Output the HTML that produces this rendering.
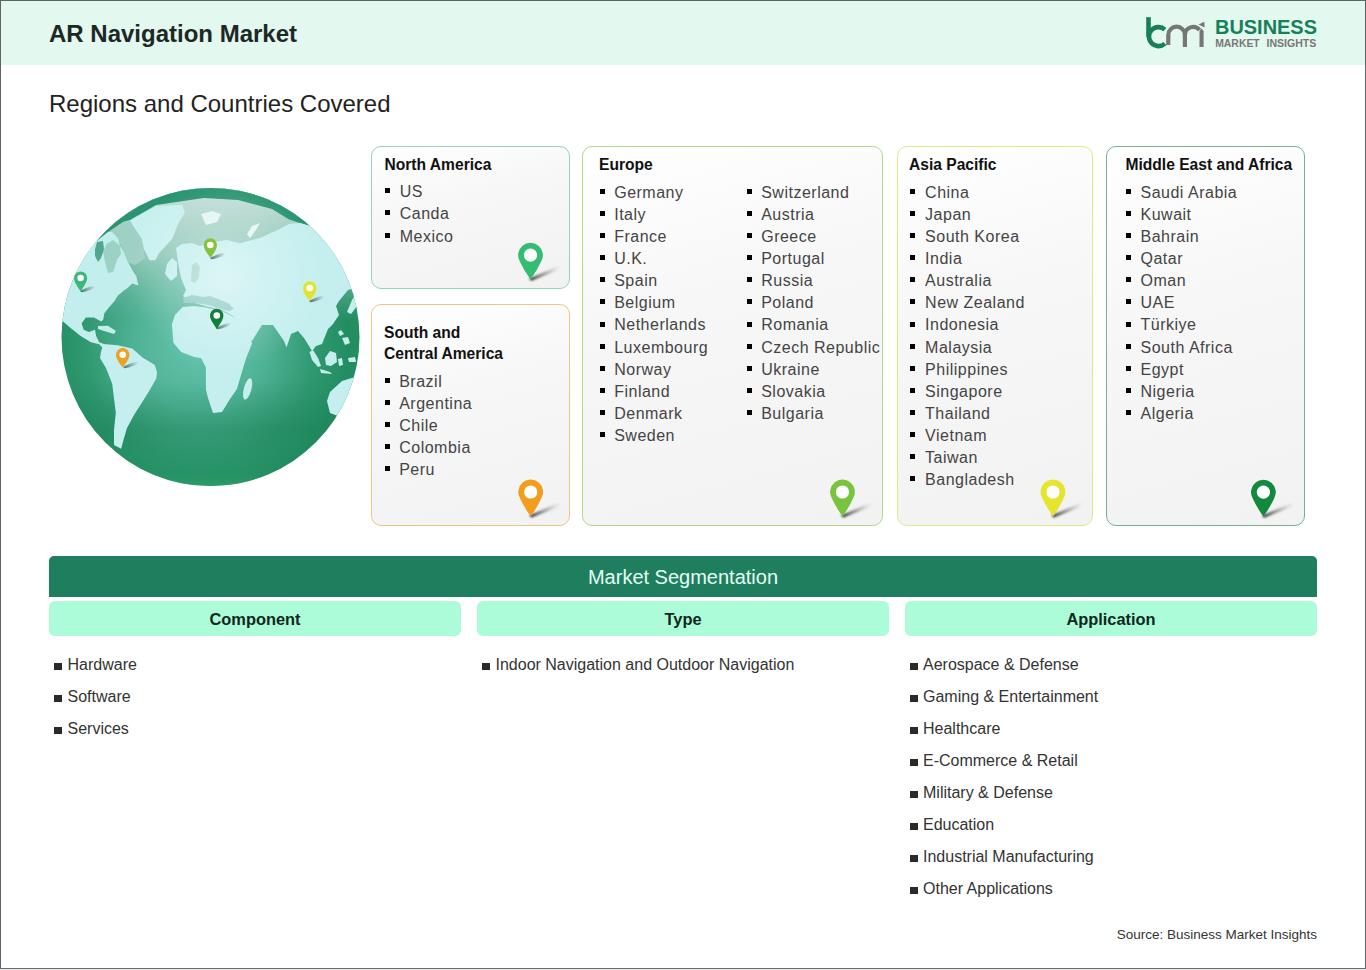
<!DOCTYPE html><html><head><meta charset="utf-8"><style>
*{margin:0;padding:0;box-sizing:border-box}
html,body{width:1366px;height:970px;overflow:hidden;background:#fff}
body{position:relative;font-family:"Liberation Sans",sans-serif;color:#222}
.abs{position:absolute;white-space:nowrap}
#frame{position:absolute;left:0;top:0;width:1366px;height:969px;border:1px solid #606366;border-top-color:#5c6766;border-bottom-color:#6a6d70}
#strip{position:absolute;left:0;top:969px;width:1366px;height:1px;background:#e6e8e8}
#hdr{position:absolute;left:1px;top:1px;width:1364px;height:64px;background:#e3f8ef}
.title{left:49px;top:19.5px;font-size:24px;font-weight:bold;color:#1d2826;line-height:28px}
.sub{left:49px;top:89.5px;font-size:24px;color:#222;line-height:28px}
.card{position:absolute;border:1.8px solid #9fd8bf;border-radius:10px;background:linear-gradient(165deg,#ffffff 0%,#f7f7f7 40%,#f2f2f2 100%)}
.ct{position:absolute;font-size:15.6px;font-weight:bold;color:#111;white-space:nowrap;line-height:20px}
.li{position:absolute;font-size:16px;color:#444;white-space:nowrap;line-height:20px;letter-spacing:0.5px}
.b{position:absolute;width:5px;height:5px;background:#000}
.seg{position:absolute;left:49px;top:556px;width:1268px;height:41px;background:#1e7e5e;border-radius:5px 5px 0 0;color:#e4fff6;font-size:20px;text-align:center;line-height:43px}
.sh{position:absolute;top:601px;height:34.5px;width:412px;background:#adfcd9;border-radius:6px;font-size:16.4px;font-weight:bold;text-align:center;line-height:36.5px;color:#0f281e}
.si{position:absolute;font-size:16px;color:#333;white-space:nowrap;line-height:20px}
.sb{position:absolute;width:8px;height:7px;background:#2a2a2a}
.src{right:49px;top:925.5px;font-size:13.5px;color:#333;line-height:18px}

</style></head><body>
<div id="hdr"></div><div id="frame"></div><div id="strip"></div>
<div class="abs title">AR Navigation Market</div>
<div class="abs sub">Regions and Countries Covered</div>
<svg id="logo" width="1366" height="70" style="position:absolute;left:0;top:0" viewBox="0 0 1366 70">
<path d="M1148.5,17.2 L1148.5,37" stroke="#17805a" stroke-width="4.6" fill="none"/>
<path d="M1164.9,29.6 A9.5,9.5 0 1 0 1164.9,43.6" stroke="#17805a" stroke-width="4.6" fill="none"/>
<path d="M1168.2,45 L1168.3,35 A8.3,8.3 0 0 1 1184.9,35 L1184.9,46.9" stroke="#767676" stroke-width="4.2" fill="none"/>
<path d="M1184.9,35 A8.2,8.2 0 0 1 1199.5,30" stroke="#767676" stroke-width="4.2" fill="none"/>
<path d="M1199.5,46.9 L1199.5,31 L1201.5,28.5 L1203.6,31 L1203.6,46.9 Z" fill="#767676"/>
<path d="M1198.5,24.5 L1204.3,21.8 L1204.6,27.5 Z" fill="#767676"/>
<text x="1215" y="34.2" font-family="Liberation Sans" font-weight="bold" font-size="20.6" fill="#17805a" textLength="102" lengthAdjust="spacingAndGlyphs">BUSINESS</text>
<text x="1215.2" y="47.3" font-family="Liberation Sans" font-weight="bold" font-size="11.2" fill="#777" textLength="44.5" lengthAdjust="spacingAndGlyphs">MARKET</text><text x="1266.5" y="47.3" font-family="Liberation Sans" font-weight="bold" font-size="11.2" fill="#777" textLength="49.8" lengthAdjust="spacingAndGlyphs">INSIGHTS</text>
</svg>

<svg id="globe" width="1366" height="520" style="position:absolute;left:0;top:0" viewBox="0 0 1366 520">
<defs>
<clipPath id="gclip"><circle cx="210.5" cy="337" r="149"/></clipPath>
<radialGradient id="hl2" cx="225" cy="275" r="95" gradientUnits="userSpaceOnUse">
<stop offset="0" stop-color="#ffffff" stop-opacity="0.4"/>
<stop offset="0.6" stop-color="#ffffff" stop-opacity="0.15"/>
<stop offset="1" stop-color="#ffffff" stop-opacity="0"/>
</radialGradient>
<radialGradient id="ocean" cx="200" cy="345" r="165" gradientUnits="userSpaceOnUse">
<stop offset="0" stop-color="#66c4ad"/>
<stop offset="0.4" stop-color="#4fb296"/>
<stop offset="0.7" stop-color="#2f9870"/>
<stop offset="0.9" stop-color="#238d62"/>
<stop offset="1" stop-color="#23905f"/>
</radialGradient>
<linearGradient id="topz" x1="0" y1="190" x2="0" y2="320" gradientUnits="userSpaceOnUse">
<stop offset="0" stop-color="#d3e6e4" stop-opacity="0.95"/>
<stop offset="0.5" stop-color="#b4dbd3" stop-opacity="0.7"/>
<stop offset="1" stop-color="#8fcabb" stop-opacity="0"/>
</linearGradient>
<linearGradient id="botband" x1="0" y1="380" x2="0" y2="490" gradientUnits="userSpaceOnUse">
<stop offset="0" stop-color="#1a7f55" stop-opacity="0"/>
<stop offset="0.45" stop-color="#187c52" stop-opacity="0.35"/>
<stop offset="0.8" stop-color="#1e8a5a" stop-opacity="0.2"/>
<stop offset="1" stop-color="#33aa70" stop-opacity="0.7"/>
</linearGradient>
<linearGradient id="pshg" x1="0" x2="1"><stop offset="0" stop-color="#1c3b33" stop-opacity="0.7"/><stop offset="1" stop-color="#1c3b33" stop-opacity="0"/></linearGradient>
</defs>
<g clip-path="url(#gclip)">
<rect x="55" y="180" width="310" height="320" fill="url(#ocean)"/>
<rect x="55" y="180" width="310" height="320" fill="url(#topz)"/>
<rect x="55" y="180" width="310" height="320" fill="url(#botband)"/>
<!-- arctic rim dark band -->
<path d="M40,240 L97,241 L108,232 L123,222 L130,220 L156,205 L204,198 L238,200 L272,209 L289,219.5 L300,223 L330,232 L380,232 L380,150 L40,150 Z" fill="#2a9470"/>
<!-- North America -->
<path d="M30,345 L63.1,321.5 L70.3,327.7 L80.6,336 L90.9,342.2 L99.2,344.2 L103.3,348.4 L104,344 L99.2,342.2 L96.1,336 L95,329.8 L88.9,331.9 L83.7,329.8 L81.6,323.6 L85.8,317.4 L94,317.4 L101.2,321.5 L103.3,319.5 L104.3,313.3 L108.5,308.1 L114.6,300.9 L117.7,295.8 L123.9,290.6 L127,288.6 L132.2,283.4 L138.4,285.5 L136.3,276.2 L132.2,270 L128,262 L124,252 L120,246 L118,238 L112,232 L108,232 L97,241 L30,241 Z" fill="#c3eeee"/>
<!-- Cuba -->
<path d="M98,326 L108,325.7 L116,331 L114,334 L104,331 L98,329 Z" fill="#c3eeee"/>
<!-- Hudson + channels -->
<path d="M106.5,244 L113,240 L120,246 L121,254 L117,260 L113,272 L108,273 L105,262 L103,252 Z" fill="#9cd1c6"/>
<path d="M97,242 L103,241 L104,249 L101,258 L98,262 L95,256 L95,249 Z" fill="#4fa88e"/>
<!-- Baffin Bay medium -->
<path d="M118,238 L124,252 L128,262 L135,265 L145,258 L142,240 L135,229 L130,220 L123,222 Z" fill="#9fd0c6"/>
<!-- Greenland -->
<path d="M130,220.6 L156,205.9 L182.5,204.7 L184.8,212.7 L178,224 L172.3,238.8 L158.7,253.5 L155.3,260.3 L149.6,260.3 L143.9,249 L141.7,238.8 L134.9,228.6 Z" fill="#c9f0f0"/>
<!-- Eurasia -->
<path d="M178,262 L176,248 L182,244 L192,243 L200,246 L207,243 L227,240 L240,243.3 L261,237.6 L278,229.7 L289,224 L300,223 L330,232 L380,232 L380,290 L358,287 L348,290 L339,301 L336,306 L339,315 L333,324 L328,329 L325,336.5 L322,344 L316,346 L312,351 L309,346 L304,338 L298,331 L291,334 L286.5,347.6 L284,341 L273,325 L262,325 L252,341 L247,341 L240,328 L233,316 L222,310 L205,306 L195,303 L188,300 L183,296 L186,290 L181,278 Z" fill="#c5efef"/>
<!-- UK/Ireland -->
<path d="M167,264 L172,258 L177,262 L177,276 L171,281 L165,274 Z" fill="#c5efef"/>
<!-- Baltic -->
<path d="M192,265 L196,262 L200,267 L199,277 L195,283 L191,281 Z" fill="#a6d6cc"/>
<!-- Svalbard / Novaya -->
<path d="M201,214 L212,211 L221,214 L217,222 L206,225 Z" fill="#e3f4f4"/>
<path d="M247,234 L252,226 L260,223 L256,230 L250,238 Z" fill="#e3f4f4"/>
<!-- Africa -->
<path d="M171.9,324.2 L175,315 L182.7,307 L193.5,306 L205.9,307.5 L221.3,310.8 L233.7,317 L238.3,324.2 L246.1,336.6 L252.3,342.8 L246.1,358.2 L241.4,373.7 L236.8,389.2 L230,399 L222,412 L213,413 L208,398 L205.9,389.2 L205.9,367.5 L201.2,358.2 L193.5,356.7 L181.1,352 L173.4,342.8 Z" fill="#c5efef"/>
<!-- Mediterranean -->
<path d="M183,298 L192,295 L203,297 L210,296 L218,299 L228,303 L234,309 L229,311 L220,309 L212,306 L203,304 L193,303 L184,303 Z" fill="#8fcdc2"/>
<!-- Madagascar -->
<ellipse cx="247.6" cy="389" rx="3.8" ry="11" transform="rotate(15 247.6 389)" fill="#c5efef"/>
<!-- South America -->
<path d="M101,352 L103.3,344 L117.7,345.3 L132.2,348.4 L142.5,357.6 L154.8,365 L157,372 L156.4,378.3 L150.2,389.2 L144.7,398.2 L134,415 L127,428 L123,441.5 L121.2,448.7 L114,445.1 L114,430 L115.8,412.7 L112.2,383.8 L106,368 L100,358 Z" fill="#c5efef"/>
<!-- Indonesia islands -->
<path d="M309.5,352 L313,350 L318,358 L321,366 L318,367 L312,360 Z" fill="#c5efef"/>
<path d="M325,358 L330,351 L336,353 L337,362 L331,366 L326,365 Z" fill="#c5efef"/>
<path d="M320,369 L330,372 L332,374 L321,373 Z" fill="#c5efef"/>
<path d="M338,359 L342,358 L343,365 L339,366 Z" fill="#c5efef"/>
<path d="M348,358 L355,357 L356,362 L349,362 Z" fill="#c5efef"/>
<path d="M342,338 L348,337 L350,343 L345,345 Z" fill="#c5efef"/>
<path d="M338,332 L341,330 L344,334 L340,336 Z" fill="#c5efef"/>
<!-- Japan / Kamchatka -->
<path d="M347,312 L352,300 L358,291 L362,294 L357,306 L351,314 Z" fill="#c5efef"/>
<!-- Australia -->
<path d="M330,392 L342,381 L355,377 L362,390 L352,405 L338,416 L330,413 L327,401 Z" fill="#c5efef"/>
<rect x="55" y="180" width="310" height="320" fill="url(#hl2)"/>
</g>
<!-- globe pins -->
<g>
<ellipse cx="88" cy="289" rx="8" ry="1.6" transform="rotate(-20 88 289)" fill="url(#pshg)"/>
<path d="M74,278 A6.6,6.6 0 1 1 87.2,278 C87.2,282 84,286 80.6,291.5 C77.2,286 74,282 74,278 Z" fill="#3cb97a"/>
<circle cx="80.6" cy="278" r="3.2" fill="#fff"/>
<ellipse cx="218" cy="256" rx="8" ry="1.6" transform="rotate(-20 218 256)" fill="url(#pshg)"/>
<path d="M203.6,245 A6.7,6.7 0 1 1 217,245 C217,249 214,253 210.5,258 C207,253 203.6,249 203.6,245 Z" fill="#86c23a"/>
<circle cx="210.3" cy="245" r="3.3" fill="#fff"/>
<ellipse cx="317" cy="299" rx="8" ry="1.6" transform="rotate(-20 317 299)" fill="url(#pshg)"/>
<path d="M303,288 A6.7,6.7 0 1 1 316.4,288 C316.4,292 313.3,296 309.7,301.2 C306,296 303,292 303,288 Z" fill="#e2e32c"/>
<circle cx="309.7" cy="288" r="3.3" fill="#fff"/>
<ellipse cx="224" cy="326" rx="8" ry="1.6" transform="rotate(-20 224 326)" fill="url(#pshg)"/>
<path d="M210,315.5 A6.7,6.7 0 1 1 223.4,315.5 C223.4,319.5 220.3,323.5 216.8,328.9 C213.2,323.5 210,319.5 210,315.5 Z" fill="#137d3a"/>
<circle cx="216.8" cy="315.5" r="3.3" fill="#fff"/>
<ellipse cx="131" cy="365" rx="8" ry="1.6" transform="rotate(-20 131 365)" fill="url(#pshg)"/>
<path d="M116,354.7 A6.7,6.7 0 1 1 129.4,354.7 C129.4,358.7 126.3,362.7 122.7,367.5 C119.1,362.7 116,358.7 116,354.7 Z" fill="#ef9f22"/>
<circle cx="122.7" cy="354.7" r="3.3" fill="#fff"/>
</g>
</svg>

<div class="card" style="left:370.5px;top:146px;width:199.5px;height:143px;border-color:#96d3b8"></div>
<div class="card" style="left:370.5px;top:304px;width:199.5px;height:222px;border-color:#efc583"></div>
<div class="card" style="left:582px;top:146px;width:300.5px;height:380px;border-color:#b0dc84"></div>
<div class="card" style="left:896.5px;top:146px;width:196.5px;height:379.5px;border-color:#e2e888"></div>
<div class="card" style="left:1106px;top:146px;width:198.5px;height:380px;border-color:#78b295"></div>
<div class="ct" style="left:384.5px;top:154.7px">North America</div>
<div class="b" style="left:385.2px;top:187.8px"></div>
<div class="li" style="left:399.7px;top:181.6px">US</div>
<div class="b" style="left:385.2px;top:210.4px"></div>
<div class="li" style="left:399.7px;top:204.2px">Canda</div>
<div class="b" style="left:385.2px;top:233.0px"></div>
<div class="li" style="left:399.7px;top:226.8px">Mexico</div>
<div class="ct" style="left:384px;top:321.6px;line-height:21px">South and<br>Central America</div>
<div class="b" style="left:385px;top:377.7px"></div>
<div class="li" style="left:399.2px;top:371.5px">Brazil</div>
<div class="b" style="left:385px;top:399.8px"></div>
<div class="li" style="left:399.2px;top:393.6px">Argentina</div>
<div class="b" style="left:385px;top:421.9px"></div>
<div class="li" style="left:399.2px;top:415.7px">Chile</div>
<div class="b" style="left:385px;top:444.0px"></div>
<div class="li" style="left:399.2px;top:437.8px">Colombia</div>
<div class="b" style="left:385px;top:466.1px"></div>
<div class="li" style="left:399.2px;top:459.9px">Peru</div>
<div class="ct" style="left:599px;top:154.7px">Europe</div>
<div class="b" style="left:599.5px;top:188.9px"></div>
<div class="li" style="left:614.2px;top:182.7px">Germany</div>
<div class="b" style="left:599.5px;top:211.0px"></div>
<div class="li" style="left:614.2px;top:204.8px">Italy</div>
<div class="b" style="left:599.5px;top:233.1px"></div>
<div class="li" style="left:614.2px;top:226.9px">France</div>
<div class="b" style="left:599.5px;top:255.2px"></div>
<div class="li" style="left:614.2px;top:249.0px">U.K.</div>
<div class="b" style="left:599.5px;top:277.3px"></div>
<div class="li" style="left:614.2px;top:271.1px">Spain</div>
<div class="b" style="left:599.5px;top:299.4px"></div>
<div class="li" style="left:614.2px;top:293.2px">Belgium</div>
<div class="b" style="left:599.5px;top:321.6px"></div>
<div class="li" style="left:614.2px;top:315.4px">Netherlands</div>
<div class="b" style="left:599.5px;top:343.7px"></div>
<div class="li" style="left:614.2px;top:337.5px">Luxembourg</div>
<div class="b" style="left:599.5px;top:365.8px"></div>
<div class="li" style="left:614.2px;top:359.6px">Norway</div>
<div class="b" style="left:599.5px;top:387.9px"></div>
<div class="li" style="left:614.2px;top:381.7px">Finland</div>
<div class="b" style="left:599.5px;top:410.0px"></div>
<div class="li" style="left:614.2px;top:403.8px">Denmark</div>
<div class="b" style="left:599.5px;top:432.1px"></div>
<div class="li" style="left:614.2px;top:425.9px">Sweden</div>
<div class="b" style="left:746.8px;top:188.9px"></div>
<div class="li" style="left:761.2px;top:182.7px">Switzerland</div>
<div class="b" style="left:746.8px;top:211.0px"></div>
<div class="li" style="left:761.2px;top:204.8px">Austria</div>
<div class="b" style="left:746.8px;top:233.1px"></div>
<div class="li" style="left:761.2px;top:226.9px">Greece</div>
<div class="b" style="left:746.8px;top:255.2px"></div>
<div class="li" style="left:761.2px;top:249.0px">Portugal</div>
<div class="b" style="left:746.8px;top:277.3px"></div>
<div class="li" style="left:761.2px;top:271.1px">Russia</div>
<div class="b" style="left:746.8px;top:299.4px"></div>
<div class="li" style="left:761.2px;top:293.2px">Poland</div>
<div class="b" style="left:746.8px;top:321.6px"></div>
<div class="li" style="left:761.2px;top:315.4px">Romania</div>
<div class="b" style="left:746.8px;top:343.7px"></div>
<div class="li" style="left:761.2px;top:337.5px">Czech Republic</div>
<div class="b" style="left:746.8px;top:365.8px"></div>
<div class="li" style="left:761.2px;top:359.6px">Ukraine</div>
<div class="b" style="left:746.8px;top:387.9px"></div>
<div class="li" style="left:761.2px;top:381.7px">Slovakia</div>
<div class="b" style="left:746.8px;top:410.0px"></div>
<div class="li" style="left:761.2px;top:403.8px">Bulgaria</div>
<div class="ct" style="left:909px;top:154.7px">Asia Pacific</div>
<div class="b" style="left:910px;top:188.9px"></div>
<div class="li" style="left:925.1px;top:182.7px">China</div>
<div class="b" style="left:910px;top:211.0px"></div>
<div class="li" style="left:925.1px;top:204.8px">Japan</div>
<div class="b" style="left:910px;top:233.1px"></div>
<div class="li" style="left:925.1px;top:226.9px">South Korea</div>
<div class="b" style="left:910px;top:255.2px"></div>
<div class="li" style="left:925.1px;top:249.0px">India</div>
<div class="b" style="left:910px;top:277.3px"></div>
<div class="li" style="left:925.1px;top:271.1px">Australia</div>
<div class="b" style="left:910px;top:299.4px"></div>
<div class="li" style="left:925.1px;top:293.2px">New Zealand</div>
<div class="b" style="left:910px;top:321.6px"></div>
<div class="li" style="left:925.1px;top:315.4px">Indonesia</div>
<div class="b" style="left:910px;top:343.7px"></div>
<div class="li" style="left:925.1px;top:337.5px">Malaysia</div>
<div class="b" style="left:910px;top:365.8px"></div>
<div class="li" style="left:925.1px;top:359.6px">Philippines</div>
<div class="b" style="left:910px;top:387.9px"></div>
<div class="li" style="left:925.1px;top:381.7px">Singapore</div>
<div class="b" style="left:910px;top:410.0px"></div>
<div class="li" style="left:925.1px;top:403.8px">Thailand</div>
<div class="b" style="left:910px;top:432.1px"></div>
<div class="li" style="left:925.1px;top:425.9px">Vietnam</div>
<div class="b" style="left:910px;top:454.2px"></div>
<div class="li" style="left:925.1px;top:448.0px">Taiwan</div>
<div class="b" style="left:910px;top:476.3px"></div>
<div class="li" style="left:925.1px;top:470.1px">Bangladesh</div>
<div class="ct" style="left:1125.5px;top:154.7px">Middle East and Africa</div>
<div class="b" style="left:1126px;top:188.9px"></div>
<div class="li" style="left:1140.5px;top:182.7px">Saudi Arabia</div>
<div class="b" style="left:1126px;top:211.0px"></div>
<div class="li" style="left:1140.5px;top:204.8px">Kuwait</div>
<div class="b" style="left:1126px;top:233.1px"></div>
<div class="li" style="left:1140.5px;top:226.9px">Bahrain</div>
<div class="b" style="left:1126px;top:255.2px"></div>
<div class="li" style="left:1140.5px;top:249.0px">Qatar</div>
<div class="b" style="left:1126px;top:277.3px"></div>
<div class="li" style="left:1140.5px;top:271.1px">Oman</div>
<div class="b" style="left:1126px;top:299.4px"></div>
<div class="li" style="left:1140.5px;top:293.2px">UAE</div>
<div class="b" style="left:1126px;top:321.6px"></div>
<div class="li" style="left:1140.5px;top:315.4px">Türkiye</div>
<div class="b" style="left:1126px;top:343.7px"></div>
<div class="li" style="left:1140.5px;top:337.5px">South Africa</div>
<div class="b" style="left:1126px;top:365.8px"></div>
<div class="li" style="left:1140.5px;top:359.6px">Egypt</div>
<div class="b" style="left:1126px;top:387.9px"></div>
<div class="li" style="left:1140.5px;top:381.7px">Nigeria</div>
<div class="b" style="left:1126px;top:410.0px"></div>
<div class="li" style="left:1140.5px;top:403.8px">Algeria</div>
<svg class="pins" width="1366" height="970" style="position:absolute;left:0;top:0" viewBox="0 0 1366 970"><defs><linearGradient id="shg" x1="0" x2="1"><stop offset="0" stop-color="#111" stop-opacity="0.95"/><stop offset="0.5" stop-color="#555" stop-opacity="0.5"/><stop offset="1" stop-color="#999" stop-opacity="0"/></linearGradient><filter id="blur2" x="-50%" y="-200%" width="200%" height="500%"><feGaussianBlur stdDeviation="1.2"/></filter></defs><path d="M529.00,278.70 L559.50,265.50 L560.50,269.50 L531.50,280.70 Z" fill="url(#shg)" filter="url(#blur2)"/><path d="M519.84,261.53 A12.4,12.4 0 1 1 541.16,261.53 Q537.11,270.51 530.50,279.50 Q523.89,270.51 519.84,261.53 Z" fill="#34bd72"/><circle cx="530.50" cy="255.20" r="6.6" fill="#fff"/><path d="M529.20,515.50 L559.70,502.30 L560.70,506.30 L531.70,517.50 Z" fill="url(#shg)" filter="url(#blur2)"/><path d="M520.04,498.33 A12.4,12.4 0 1 1 541.36,498.33 Q537.31,507.31 530.70,516.30 Q524.09,507.31 520.04,498.33 Z" fill="#f29d1c"/><circle cx="530.70" cy="492.00" r="6.6" fill="#fff"/><path d="M841.00,515.50 L871.50,502.30 L872.50,506.30 L843.50,517.50 Z" fill="url(#shg)" filter="url(#blur2)"/><path d="M831.84,498.33 A12.4,12.4 0 1 1 853.16,498.33 Q849.11,507.31 842.50,516.30 Q835.89,507.31 831.84,498.33 Z" fill="#78c43c"/><circle cx="842.50" cy="492.00" r="6.6" fill="#fff"/><path d="M1051.50,515.50 L1082.00,502.30 L1083.00,506.30 L1054.00,517.50 Z" fill="url(#shg)" filter="url(#blur2)"/><path d="M1042.34,498.33 A12.4,12.4 0 1 1 1063.66,498.33 Q1059.61,507.31 1053.00,516.30 Q1046.39,507.31 1042.34,498.33 Z" fill="#e4e52c"/><circle cx="1053.00" cy="492.00" r="6.6" fill="#fff"/><path d="M1261.90,515.70 L1292.40,502.50 L1293.40,506.50 L1264.40,517.70 Z" fill="url(#shg)" filter="url(#blur2)"/><path d="M1252.74,498.53 A12.4,12.4 0 1 1 1274.06,498.53 Q1270.01,507.51 1263.40,516.50 Q1256.79,507.51 1252.74,498.53 Z" fill="#118a3e"/><circle cx="1263.40" cy="492.20" r="6.6" fill="#fff"/></svg>
<div class="seg">Market Segmentation</div>
<div class="sh" style="left:49px">Component</div>
<div class="sh" style="left:477px">Type</div>
<div class="sh" style="left:905px">Application</div>
<div class="sb" style="left:54px;top:662.7px"></div>
<div class="si" style="left:67.5px;top:655.1px">Hardware</div>
<div class="sb" style="left:54px;top:694.7px"></div>
<div class="si" style="left:67.5px;top:687.1px">Software</div>
<div class="sb" style="left:54px;top:726.7px"></div>
<div class="si" style="left:67.5px;top:719.1px">Services</div>
<div class="sb" style="left:482px;top:662.7px"></div>
<div class="si" style="left:495.5px;top:655.1px">Indoor Navigation and Outdoor Navigation</div>
<div class="sb" style="left:910px;top:662.7px"></div>
<div class="si" style="left:923px;top:655.1px">Aerospace &amp; Defense</div>
<div class="sb" style="left:910px;top:694.7px"></div>
<div class="si" style="left:923px;top:687.1px">Gaming &amp; Entertainment</div>
<div class="sb" style="left:910px;top:726.7px"></div>
<div class="si" style="left:923px;top:719.1px">Healthcare</div>
<div class="sb" style="left:910px;top:758.7px"></div>
<div class="si" style="left:923px;top:751.1px">E-Commerce &amp; Retail</div>
<div class="sb" style="left:910px;top:790.7px"></div>
<div class="si" style="left:923px;top:783.1px">Military &amp; Defense</div>
<div class="sb" style="left:910px;top:822.7px"></div>
<div class="si" style="left:923px;top:815.1px">Education</div>
<div class="sb" style="left:910px;top:854.7px"></div>
<div class="si" style="left:923px;top:847.1px">Industrial Manufacturing</div>
<div class="sb" style="left:910px;top:886.7px"></div>
<div class="si" style="left:923px;top:879.1px">Other Applications</div>
<div class="abs src">Source: Business Market Insights</div>
</body></html>
